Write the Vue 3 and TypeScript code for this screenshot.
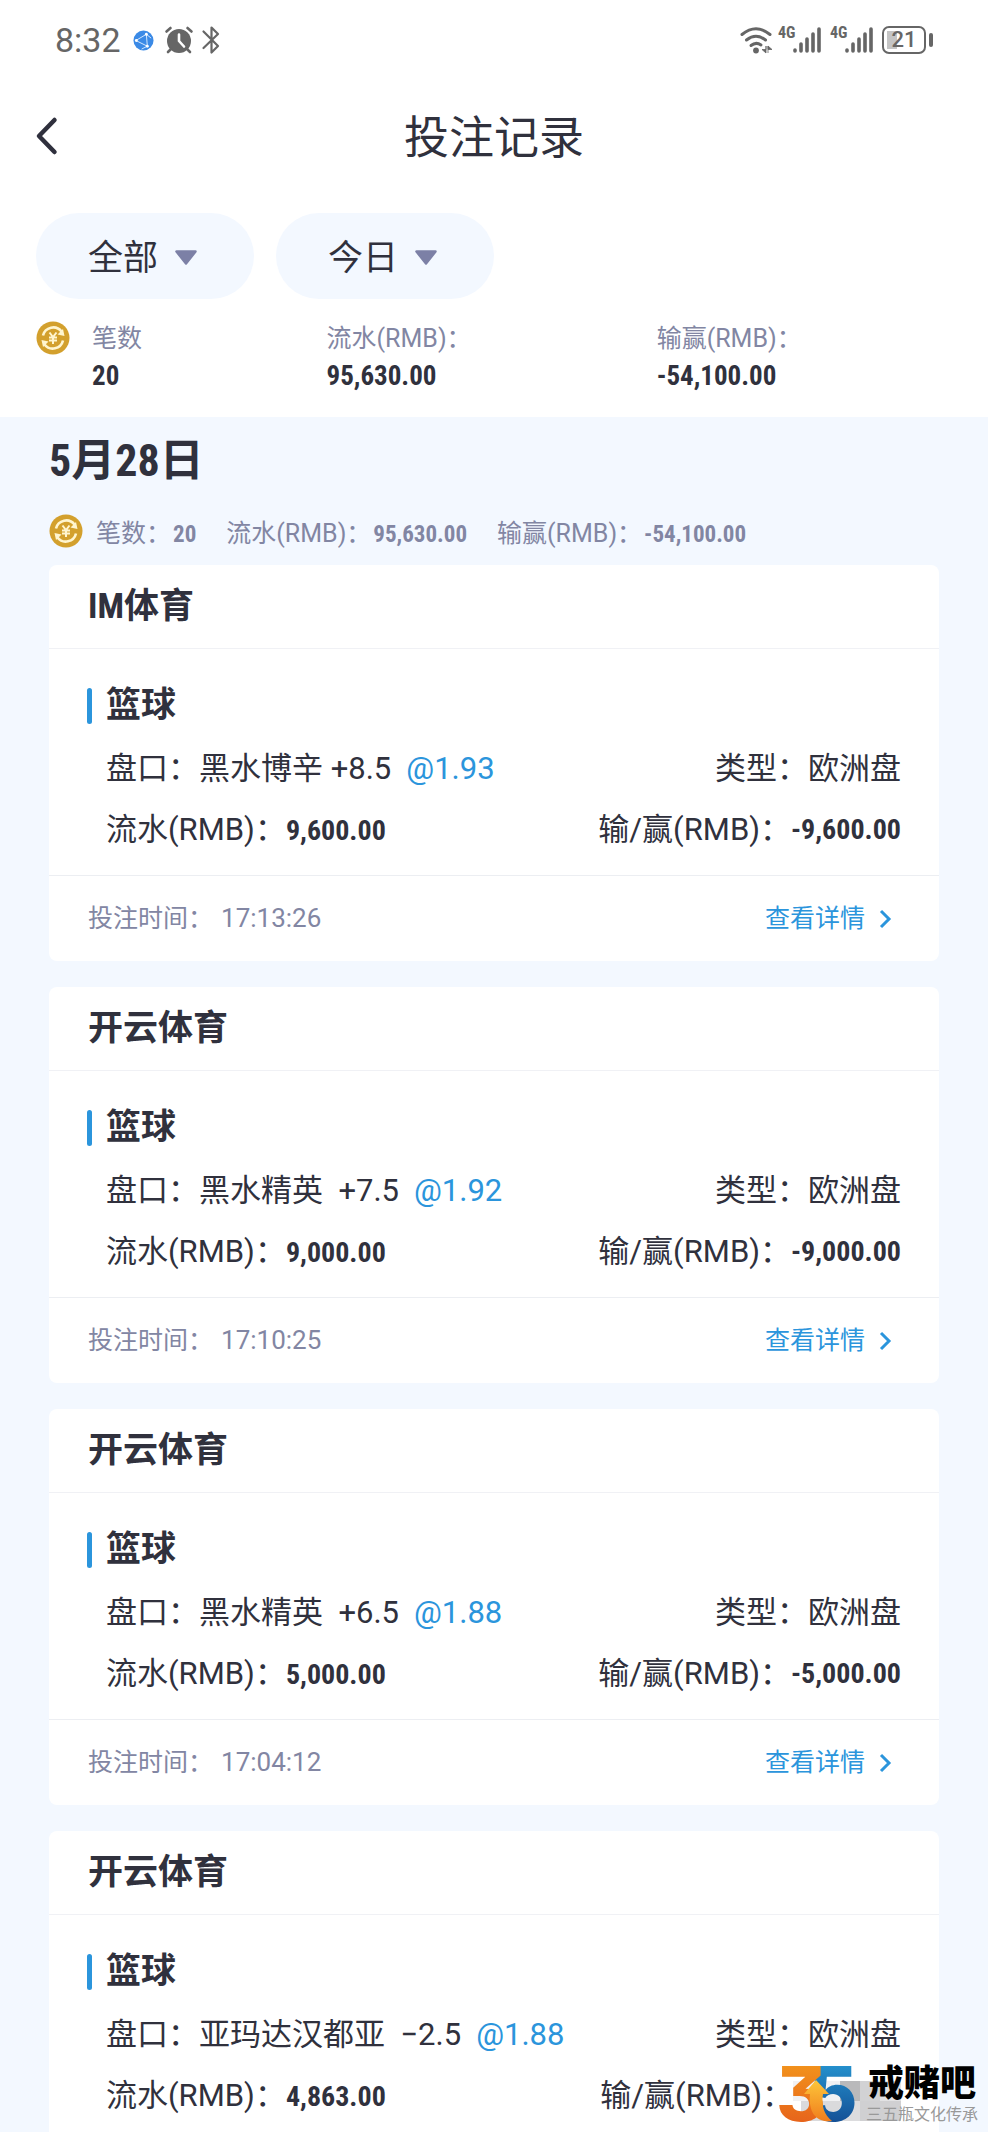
<script setup lang="ts">
interface Bet {
  venue: string
  sport: string
  pick: string
  odds: string
  turnover: string
  result: string | null
  time: string
}

const bets: Bet[] = [
  { venue: 'IM体育', sport: '篮球', pick: '黑水博辛 +8.5', odds: '@1.93', turnover: '9,600.00', result: '-9,600.00', time: '17:13:26' },
  { venue: '开云体育', sport: '篮球', pick: '黑水精英  +7.5', odds: '@1.92', turnover: '9,000.00', result: '-9,000.00', time: '17:10:25' },
  { venue: '开云体育', sport: '篮球', pick: '黑水精英  +6.5', odds: '@1.88', turnover: '5,000.00', result: '-5,000.00', time: '17:04:12' },
  { venue: '开云体育', sport: '篮球', pick: '亚玛达汉都亚  −2.5', odds: '@1.88', turnover: '4,863.00', result: null, time: '' },
]

const filters = ['全部', '今日']
const signals = [1, 2]
</script>

<template>
  <div class="page">
    <header class="top">
      <div class="status">
        <div class="status-side">
          <span class="clock">8:32</span>
          <svg class="globe" viewBox="0 0 22 22">
            <circle cx="11" cy="11" r="10.5" fill="#3b8ae6" />
            <path d="M3 11 14 4.500M3 11l12 6M14 4.500 15 17M14 4.500l5 4M15 17l-6 3" fill="none" stroke="#d8eaff" stroke-width="1" />
            <circle cx="3.500" cy="11" r="1.500" fill="#fff" />
            <circle cx="14" cy="4.500" r="1.500" fill="#fff" />
            <circle cx="15" cy="17" r="1.500" fill="#fff" />
          </svg>
          <svg class="alarm" viewBox="0 0 28 28">
            <circle cx="14" cy="15" r="12" fill="#666" />
            <path d="M1.500 5.500 5.500 2M26.500 5.500 22.500 2M3 26l3-3M25 26l-3-3" fill="none" stroke="#666" stroke-width="2.600" stroke-linecap="round" />
            <path d="M14 8.500V15l5 5.500" fill="none" stroke="#fff" stroke-width="2.600" stroke-linecap="round" stroke-linejoin="round" />
          </svg>
          <svg class="bluetooth" viewBox="0 0 18 28">
            <path d="M1.500 5.500 16 20l-6.500 6.500V1.500L16 8 1.500 22" fill="none" stroke="#666" stroke-width="2.200" stroke-linecap="round" stroke-linejoin="round" />
          </svg>
        </div>
        <div class="status-side">
          <svg class="wifi" viewBox="0 0 34 28">
            <g fill="none" stroke="#666" stroke-width="3" stroke-linecap="round">
              <path d="M2 8.500Q16 -3 30 8.500" />
              <path d="M6.500 14Q16 6.500 25.500 14" />
              <path d="M11 19.500Q16 15.500 21 19" />
            </g>
            <circle cx="16" cy="24.500" r="2.900" fill="#666" />
            <path d="M26 20v7l-4-3.500h4zM28 20v7M28 20l4 3.500h-4z" fill="#666" stroke="#666" stroke-width=".8" />
          </svg>
          <div v-for="n in signals" :key="n" class="signal">
            <span class="network">4G</span>
            <svg class="bars" viewBox="0 0 28 28">
              <path d="M2 24v1M8 18v7M14 13v12M20 8v17M26 3v22" fill="none" stroke="#666" stroke-width="3.600" stroke-linecap="round" />
            </svg>
          </div>
          <div class="battery"><span>21</span></div>
        </div>
      </div>

      <div class="nav">
        <button class="back" type="button" aria-label="返回">
          <svg viewBox="0 0 22 38"><path d="M18.500 3 3 19l15.500 16" fill="none" stroke="#2f303d" stroke-width="4.500" stroke-linecap="round" stroke-linejoin="round" /></svg>
        </button>
        <h1>投注记录</h1>
      </div>

      <div class="filters">
        <button v-for="f in filters" :key="f" class="pill" type="button">
          {{ f }}
          <svg viewBox="0 0 24 16"><path d="M2.500 1.500h19L12 13.500z" fill="#7c80a6" stroke="#7c80a6" stroke-width="2.500" stroke-linejoin="round" /></svg>
        </button>
      </div>

      <div class="totals">
        <svg class="coin" viewBox="0 0 34 34">
          <circle cx="17" cy="17" r="16.500" fill="#d3a02d" />
          <path d="M7 14.500a10.500 10.500 0 0 1 18.500-4M27 19.500a10.500 10.500 0 0 1-18.500 4" fill="none" stroke="#fff5cf" stroke-width="2.600" />
          <path d="m28.500 15-7-1.500 5.500-5.500zM5.500 19l7 1.500-5.500 5.500z" fill="#fff5cf" />
          <path d="m13.500 11.500 3.500 4.500 3.500-4.500M17 16v7M13 16.500h8M13 19.500h8" fill="none" stroke="#fff5cf" stroke-width="2" />
        </svg>
        <dl>
          <div><dt>笔数</dt><dd>20</dd></div>
          <div><dt>流水(RMB)：</dt><dd>95,630.00</dd></div>
          <div><dt>输赢(RMB)：</dt><dd>-54,100.00</dd></div>
        </dl>
      </div>
    </header>

    <main>
      <h2>5月28日</h2>
      <div class="day">
        <svg class="coin" viewBox="0 0 34 34">
          <circle cx="17" cy="17" r="16.500" fill="#d3a02d" />
          <path d="M7 14.500a10.500 10.500 0 0 1 18.500-4M27 19.500a10.500 10.500 0 0 1-18.500 4" fill="none" stroke="#fff5cf" stroke-width="2.600" />
          <path d="m28.500 15-7-1.500 5.500-5.500zM5.500 19l7 1.500-5.500 5.500z" fill="#fff5cf" />
          <path d="m13.500 11.500 3.500 4.500 3.500-4.500M17 16v7M13 16.500h8M13 19.500h8" fill="none" stroke="#fff5cf" stroke-width="2" />
        </svg>
        <span>笔数：<b>20</b></span>
        <span>流水(RMB)：<b>95,630.00</b></span>
        <span>输赢(RMB)：<b>-54,100.00</b></span>
      </div>

      <div class="list">
        <article v-for="(bet, i) in bets" :key="i" class="card">
          <h3>{{ bet.venue }}</h3>
          <div class="body">
            <h4>{{ bet.sport }}</h4>
            <div class="row">
              <span class="pick">盘口：{{ bet.pick }}<em>{{ bet.odds }}</em></span>
              <span>类型：欧洲盘</span>
            </div>
            <div class="row">
              <span>流水(RMB)：<b>{{ bet.turnover }}</b></span>
              <span class="result">
                输/赢(RMB)：<b v-if="bet.result">{{ bet.result }}</b>
                <svg v-else class="mosaic" viewBox="0 0 108 40">
                  <path d="M0 0h51v20H0z" fill="#f1f1f3" />
                  <path d="M47 0h20v20H47z" fill="#b9b9bb" />
                  <path d="M67 0h20v20H67z" fill="#d2d2d4" />
                  <path d="M87 0h21v20H87z" fill="#e2e2e4" />
                  <path d="M8 20h39v20H8z" fill="#dadadc" />
                  <path d="M47 20h20v20H47z" fill="#dcdcde" />
                  <path d="M67 20h41v20H67z" fill="#d0d0d2" />
                </svg>
              </span>
            </div>
          </div>
          <div v-if="bet.time" class="foot">
            <span>投注时间：<time>{{ bet.time }}</time></span>
            <a href="#">
              查看详情
              <svg viewBox="0 0 12 20"><path d="m2 2 8 8-8 8" fill="none" stroke="#2b95dc" stroke-width="3" /></svg>
            </a>
          </div>
        </article>
      </div>
    </main>

    <aside class="brand">
      <svg class="brand-logo" viewBox="0 0 76 60">
        <defs>
          <linearGradient id="warm" x1="0" y1="0" x2="0" y2="1">
            <stop offset="0" stop-color="#f5a01c" /><stop offset="1" stop-color="#e4571b" />
          </linearGradient>
          <linearGradient id="cool" x1="0" y1="0" x2="0" y2="1">
            <stop offset="0" stop-color="#2aa5de" /><stop offset="1" stop-color="#0f3d86" />
          </linearGradient>
          <linearGradient id="arrow" x1="0" y1="0" x2="0" y2="1">
            <stop offset="0" stop-color="#fdc63a" /><stop offset="1" stop-color="#f07d1d" />
          </linearGradient>
        </defs>
        <text class="digit" x="30" y="57" fill="url(#cool)">5</text>
        <text class="digit" x="-2" y="57" fill="url(#warm)">3</text>
        <path d="M38 16 51 30h-6c-2 11 1 21 9 27-15 2-24-8-22-27h-6z" fill="url(#arrow)" />
      </svg>
      <div class="brand-text">
        <strong>戒赌吧</strong>
        <small>三五瓶文化传承</small>
      </div>
    </aside>
  </div>
</template>

<style>
body {
  margin: 0;
}
</style>

<style scoped>
.page {
  --ink: #30313d;
  --muted: #8286a3;
  --blue: #2b95dc;
  --num: "Roboto Condensed", "Liberation Sans Narrow", Roboto, "Noto Sans CJK SC", sans-serif;
  position: relative;
  display: flex;
  flex-direction: column;
  height: 100vh;
  overflow: hidden;
  background: #f3f8ff;
  color: var(--ink);
  font-family: Roboto, "Noto Sans CJK SC", sans-serif;
  font-size: 31px;
}
svg {
  display: block;
  flex: none;
  overflow: visible;
}
h1, h2, h3, h4, dl, dd {
  margin: 0;
}
button {
  padding: 0;
  border: 0;
  background: none;
  color: inherit;
  font: inherit;
}
b, dd {
  font-family: var(--num);
  font-weight: 700;
}
.top {
  flex: none;
  padding: 0 36px 22px;
  background: #fff;
}
.status {
  display: flex;
  justify-content: space-between;
  align-items: center;
  height: 80px;
  padding: 0 19px;
  color: #666;
}
.status-side {
  display: flex;
  align-items: center;
}
.clock {
  font-size: 34px;
}
.globe {
  width: 21px;
  margin-left: 12px;
}
.alarm {
  width: 28px;
  margin-left: 11px;
}
.bluetooth {
  width: 18px;
  margin-left: 9px;
}
.wifi {
  width: 34px;
  margin-right: 4px;
}
.signal {
  display: flex;
  align-items: flex-start;
  margin-right: 9px;
}
.network {
  width: 15px;
  font-family: var(--num);
  font-size: 16px;
  font-weight: 700;
  line-height: 14px;
}
.bars {
  width: 28px;
}
.battery {
  position: relative;
  box-sizing: border-box;
  width: 44px;
  height: 28px;
  margin-right: 7px;
  border: 2px solid #666;
  border-radius: 7px;
  background: linear-gradient(#c4c4c4, #c4c4c4) 3px 3px / 10px 18px no-repeat;
  font-size: 22px;
  font-weight: 500;
  line-height: 24px;
  text-align: center;
}
.battery::after {
  content: "";
  position: absolute;
  top: 5px;
  right: -9px;
  width: 4px;
  height: 14px;
  border-radius: 2px;
  background: #666;
}
.nav {
  display: grid;
  grid-template-columns: 80px 1fr 80px;
  align-items: center;
  height: 112px;
}
.back svg {
  width: 22px;
}
h1 {
  padding-bottom: 4px;
  font-size: 45px;
  font-weight: 400;
  text-align: center;
}
.filters {
  display: flex;
  gap: 22px;
  margin-top: 21px;
}
.pill {
  display: flex;
  align-items: center;
  justify-content: center;
  gap: 16px;
  box-sizing: border-box;
  width: 218px;
  height: 86px;
  padding: 0 4px 4px 0;
  border-radius: 43px;
  background: #f3f8ff;
  font-size: 35px;
}
.pill svg {
  width: 24px;
  margin-top: 8px;
}
.totals {
  display: flex;
  gap: 22px;
  margin-top: 22px;
}
.coin {
  width: 34px;
  height: 34px;
}
.totals dl {
  flex: 1;
  display: grid;
  grid-template-columns: 27fr 38fr 34fr;
}
dt {
  color: var(--muted);
  font-size: 25px;
  line-height: 36px;
}
dd {
  font-size: 27px;
  line-height: 38px;
}
main {
  flex: 1;
  min-height: 0;
  padding: 0 49px;
  overflow: hidden;
}
h2 {
  height: 88px;
  font-family: var(--num);
  font-size: 44px;
  line-height: 88px;
}
.day {
  display: flex;
  align-items: center;
  height: 52px;
  color: var(--muted);
  font-size: 25px;
}
.day b {
  margin-left: 2px;
  font-size: 23px;
}
.day span + span {
  margin-left: 30px;
}
.day .coin {
  margin-right: 13px;
}
.list {
  display: grid;
  gap: 26px;
  margin-top: 8px;
}
.card {
  border-radius: 8px;
  background: #fff;
}
h3 {
  padding: 0 39px;
  border-bottom: 1px solid #f0f1f5;
  font-family: var(--num);
  font-size: 35px;
  line-height: 83px;
}
.body {
  padding: 37px 38px 13px;
}
h4 {
  display: flex;
  align-items: center;
  gap: 14px;
  margin-bottom: 12px;
  font-size: 35px;
  line-height: 40px;
}
h4::before {
  content: "";
  width: 5px;
  height: 36px;
  border-radius: 3px;
  background: var(--blue);
}
.row {
  display: flex;
  justify-content: space-between;
  height: 61px;
  padding-left: 19px;
  line-height: 61px;
  white-space: nowrap;
}
.row + .row {
  padding-bottom: 2px;
}
.row b {
  font-size: 28px;
}
.pick {
  white-space: pre;
}
em {
  margin-left: 15px;
  color: var(--blue);
  font-style: normal;
}
.result {
  display: flex;
}
.mosaic {
  width: 108px;
  height: 40px;
  margin-top: 16px;
}
.foot {
  display: flex;
  justify-content: space-between;
  border-top: 1px solid #eceef2;
  padding: 0 48px 0 39px;
  color: var(--muted);
  font-size: 25px;
  line-height: 85px;
}
time {
  margin-left: 8px;
  font-size: 26px;
}
.foot a {
  display: flex;
  align-items: center;
  gap: 14px;
  color: var(--blue);
  text-decoration: none;
}
.foot svg {
  width: 12px;
}
.brand {
  position: absolute;
  right: 10px;
  bottom: 8px;
  display: flex;
  align-items: center;
  gap: 12px;
}
.brand-logo {
  width: 76px;
  height: 60px;
}
.digit {
  font-family: Inter, "Liberation Sans", sans-serif;
  font-size: 76px;
  font-weight: 800;
  font-feature-settings: "cv09";
}
.brand-text {
  display: grid;
  justify-items: center;
  color: #000;
}
.brand-text strong {
  font-size: 36px;
  font-weight: 900;
  line-height: 38px;
}
.brand-text small {
  color: #999;
  font-family: "Noto Sans CJK SC", sans-serif;
  font-size: 16px;
  line-height: 20px;
}
</style>
